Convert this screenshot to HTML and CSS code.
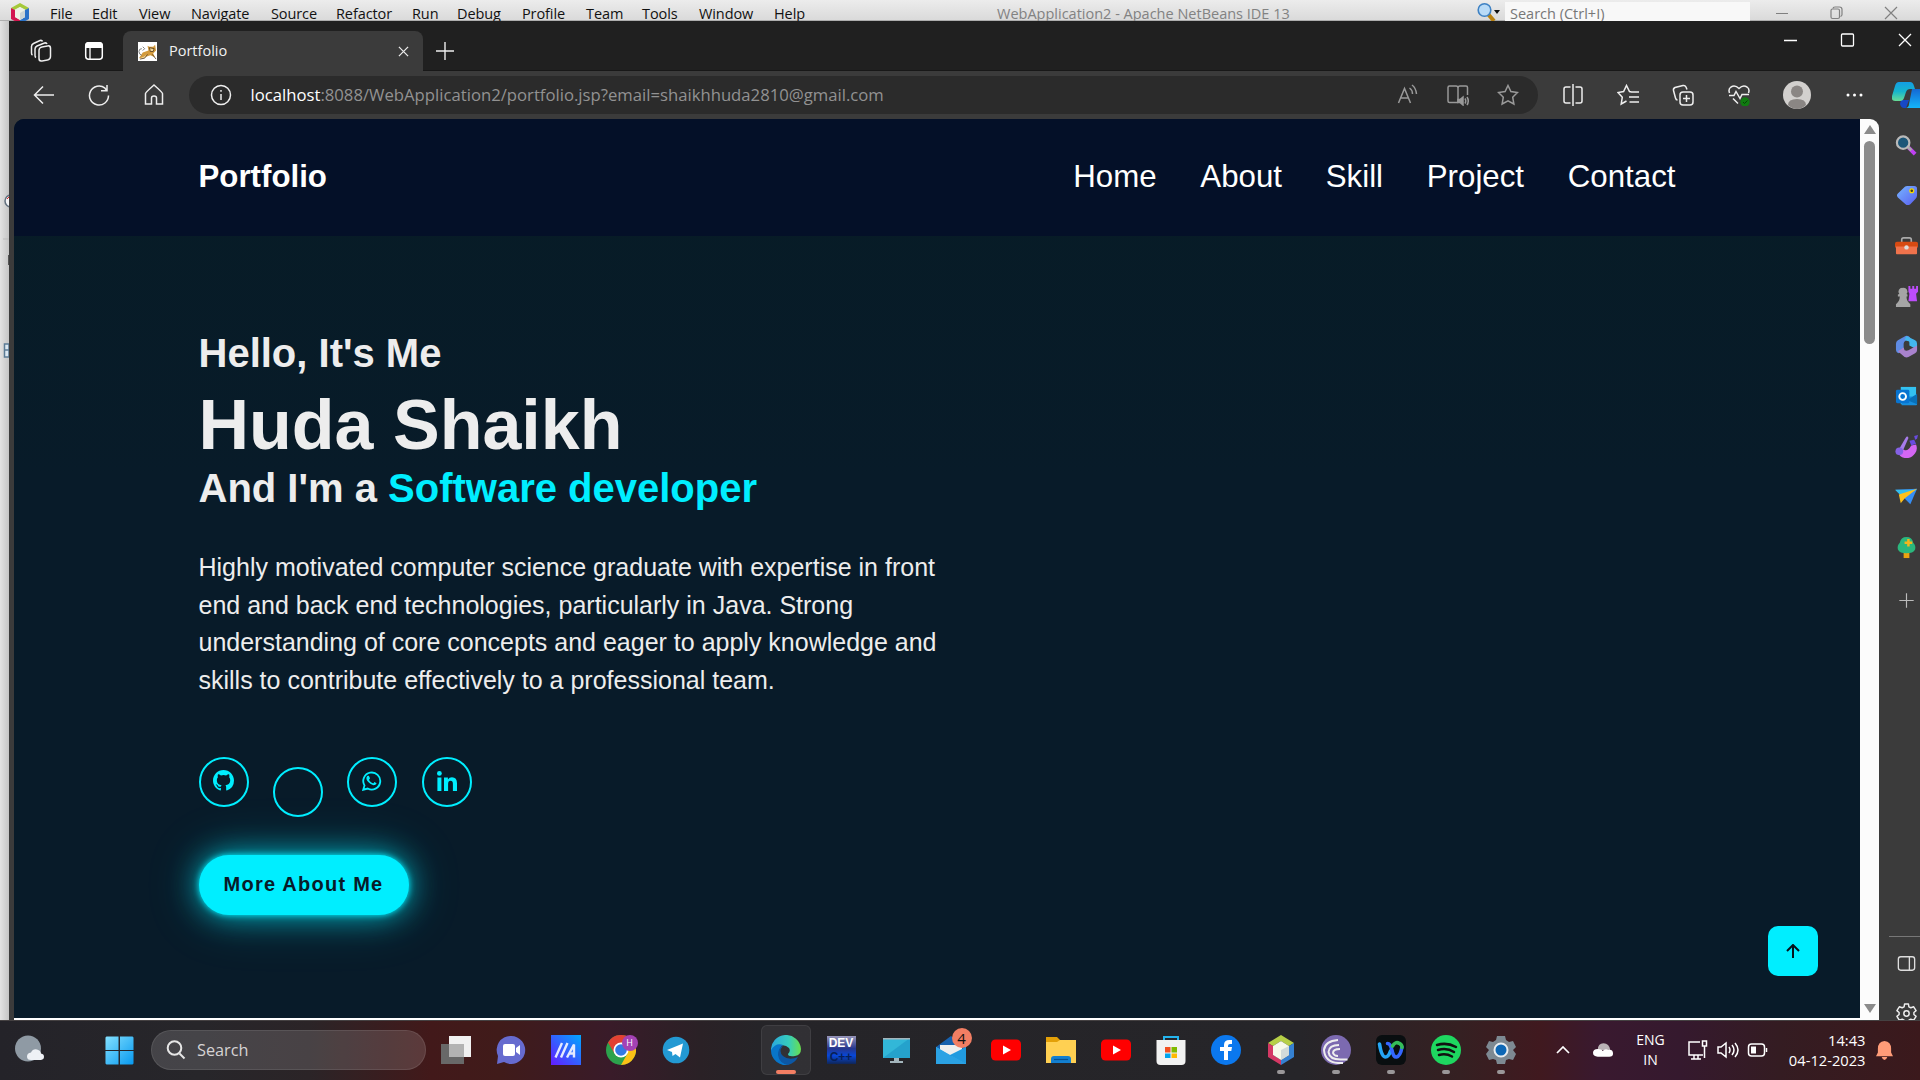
FILE: index.html
```html
<!DOCTYPE html>
<html lang="en">
<head>
<meta charset="utf-8">
<title>Portfolio</title>
<link rel="stylesheet" href="styles.css">
</head>
<body>
<div class="screen">
  <header class="ide">
    <svg class="ide-logo" viewBox="0 0 20 22"><path d="M1 6 10 1l9 5-3 2-6-3-6 3z" fill="#a5c93a"/><path d="M1 6v11l9 5v-4l-5-3V8z" fill="#d3164f"/><path d="M19 6v11l-9 5v-4l5-3V8z" fill="#2a72c8"/><path d="m5 8 5-3 5 3v7l-5 3-5-3z" fill="#eef1e6"/><path d="m10 11 5-3v7l-5 3z" fill="#ccd5d6"/></svg>
    <nav class="ide-menu"><span>File</span><span>Edit</span><span>View</span><span>Navigate</span><span>Source</span><span>Refactor</span><span>Run</span><span>Debug</span><span>Profile</span><span>Team</span><span>Tools</span><span>Window</span><span>Help</span></nav>
    <div class="ide-title">WebApplication2 - Apache NetBeans IDE 13</div>
    <svg class="ide-find" viewBox="0 0 24 21"><path d="m11 14 6 7" stroke="#b8800e" stroke-width="4"/><circle cx="7.500" cy="10" r="6.300" fill="#b9dbf7" stroke="#3f82c4" stroke-width="1.600"/><path d="M17 10h6l-3 4z" fill="#111"/></svg>
    <div class="ide-search">Search (Ctrl+I)</div>
    <svg class="ide-controls" viewBox="0 0 136 21" fill="none" stroke="#808080" stroke-width="1.200"><path d="M5 13.500h12M114 7l12 12M126 7l-12 12"/><rect x="60" y="9" width="8.500" height="9.500" rx="1.500"/><path d="M62 8.500q0-1.500 2-1.500h4.500q2.500 0 2.500 2.500v5q0 1.500-1.500 2"/></svg>
  </header>

  <div class="workspace">
    <aside class="ide-edge">
      <svg viewBox="0 0 9 300"><circle cx="11" cy="101" r="6" fill="#f3f3f5" stroke="#62707e" stroke-width="1.500"/><path d="m7 99 2-2" stroke="#d22"/><path d="M3 139h6" stroke="#bbb"/><path d="M8 155h1v10H8z" fill="#555"/><path d="M4.500 244H9v13H4.500zM5 250h4" fill="#dce8f2" stroke="#5b7b95" stroke-width="1.500"/></svg>
    </aside>
    <div class="browser">
      <div class="tabs">
        <svg class="tab-tool" viewBox="0 0 22 24" fill="none" stroke="#eee" stroke-width="1.500"><rect x="9" y="8" width="11.500" height="14" rx="3" transform="skewY(-10) translate(0 2)"/><path d="M6 18.500q-1-.5-1-2V10q0-2 2-3l7.500-3q2-.5 2.500 1"/><path d="M2.500 16q-1-.5-1-2V7.500q0-2 2-3L10 1.500q2-.5 2.500 1"/></svg>
        <svg class="tab-tool second" viewBox="0 0 20 20"><rect x="1.700" y="1.700" width="16.600" height="16.600" rx="3" fill="none" stroke="#fff" stroke-width="1.500"/><path d="M1.500 7V4q0-3 3-3h11q3 0 3 3v3z" fill="#fff"/><path d="M6 7v11" stroke="#fff" stroke-width="1.300"/></svg>
        <div class="tab">
          <svg class="favicon" viewBox="0 0 20 20"><path d="M0 0h20v20H0z" fill="#fff"/><path d="m1 17 4-6 6-2-1-5 2 1h4l2-2 1 6-3 3 2 4-5-2-6 2z" fill="#d49b3c"/><path d="m12 6 5 1-1 3h-3zM2 18l5-1 3-4M15 13l4 5" fill="#f2d698" stroke="#4c3215" stroke-width=".8"/><path d="M4 7Q1 7 1 10t3 4M5 5l2 2-2 2" fill="none" stroke="#777"/></svg>
          <span class="tab-name">Portfolio</span>
          <svg class="tab-close" viewBox="0 0 12 12"><path d="m1 1 10 10M11 1 1 11" stroke="#e8e8e8" stroke-width="1.400"/></svg>
        </div>
        <svg class="tab-new" viewBox="0 0 18 18"><path d="M9 0v18M0 9h18" stroke="#eee" stroke-width="1.400"/></svg>
        <svg class="win-controls" viewBox="0 0 130 16" fill="none" stroke="#fff" stroke-width="1.300"><path d="M1 8.500h13M116 2l12 12M128 2l-12 12"/><rect x="58.500" y="2" width="12" height="12" rx="1"/></svg>
      </div>

      <div class="toolbar">
        <svg class="nav-icon" viewBox="0 0 22 22"><path d="M22 11H3M11 2.500 2.500 11l8.500 8.500"/></svg>
        <svg class="nav-icon" viewBox="0 0 22 22"><path d="M20.500 11.500A9.500 9.500 0 1 1 17 4.200l1.500 2M19 1v5.700h-6"/></svg>
        <svg class="nav-icon" viewBox="0 0 22 22"><path d="M2.500 9.500Q2.500 8.500 11 1q8.500 7.500 8.500 8.500v10.500h-6v-6q0-2-2.500-2t-2.500 2v6h-6z"/></svg>
        <div class="address">
          <svg class="info" viewBox="0 0 22 22"><circle cx="11" cy="11" r="9.500"/><path d="M11 10v6M11 6v1.800"/></svg>
          <div class="url"><b>localhost</b>:8088/WebApplication2/portfolio.jsp?email=shaikhhuda2810@gmail.com</div>
          <svg class="dim" viewBox="0 0 22 22"><path d="M1.500 19 7.500 4.500 13.500 19M3.500 14h8M12.500 4q3 2 3 6M15 1q4 3 4.500 9"/></svg>
          <svg class="dim" viewBox="0 0 22 22"><path d="M11 18.500H2.500q-1.500 0-1.500-1.500V3.500Q1 2 2.500 2H9q2 0 2 2 0-2 2-2h6q1.500 0 1.500 1.500V11M11 4v14"/><path d="M11 15.500h2l3-2.500v8l-3-2.500h-2z" fill="#999"/><path d="M18 14.500q1.500 2.500 0 5M20 13q2.500 4 0 8"/></svg>
          <svg class="dim" viewBox="0 0 22 22"><path d="m11 1.500 2.900 6.100 6.600.9-4.800 4.700 1.200 6.800-5.900-3.200L5.100 20l1.200-6.800L1.500 8.500l6.600-.9z"/></svg>
        </div>
        <div class="tools">
          <svg viewBox="0 0 22 22"><path d="M11 0v22M8.500 3H4Q2 3 2 5v12q0 2 2 2h4.500M13.500 3H18q2 0 2 2v12q0 2-2 2h-4.500"/></svg>
          <svg viewBox="0 0 22 22"><path d="m14.500 8-2-.4L9.500 1.500 6.600 7.600 1 8.500l4.300 4.700L4.200 20l5.300-3M13.500 8H22M12 13h10M12.500 18H22"/></svg>
          <svg viewBox="0 0 22 22"><rect x="8" y="8" width="13" height="13" rx="3"/><path d="M14.500 11v7M11 14.500h7M5.500 16q-1.500 0-2-2L1.500 6.500q-.5-2 1.500-3l8-2q2-.5 3 1.500l1 2.500"/></svg>
          <svg viewBox="0 0 22 22"><path d="M1.500 9Q0 5 3 3q4-2.500 8 1.500Q15 .5 19 3q3 2 1.500 6M1 11.500h5l2-4 4 7 2-4h7M5 14.500l5 5"/><circle cx="17" cy="18" r="4.700" fill="#107c10" stroke="none"/><path d="m15 18 1.500 1.500 3-3" stroke="#073f08" stroke-width="1"/></svg>
          <svg class="avatar" viewBox="0 0 28 28"><circle cx="14" cy="14" r="14" fill="#d2d0ce"/><circle cx="14" cy="10.500" r="6" fill="#8a8684"/><path d="M5 24q0-6 9-6t9 6q-4 4-9 4t-9-4z" fill="#8a8684"/></svg>
          <svg viewBox="0 0 22 22"><g fill="#fff" stroke="none"><circle cx="4" cy="11" r="1.500"/><circle cx="10.500" cy="11" r="1.500"/><circle cx="17" cy="11" r="1.500"/></g></svg>
        </div>
        <svg class="copilot" viewBox="0 0 28 28"><defs><linearGradient id="cpA" x2="0" y2="1"><stop stop-color="#139de5"/><stop offset=".5" stop-color="#16b5cc"/><stop offset="1" stop-color="#68dc95"/></linearGradient><linearGradient id="cpB" x2="0" y2="1"><stop stop-color="#1468d4"/><stop offset="1" stop-color="#14b5fa"/></linearGradient></defs><path d="M9 19h8l-3 8h-2q-3 0-4-4z" fill="#1748c7"/><path d="M7 1h11q3 0 4 4l1 3h-5q-3 0-4 3l-2 6q-1 3-4 3H3q-4 0-3-5L3 5q1-4 4-4z" fill="url(#cpA)"/><path d="M20 8h8v19H14q3-1 3-4l1-5z" fill="url(#cpB)"/></svg>
      </div>

      <div class="content">
        <main class="page">
          <header class="site-header">
            <div class="logo">Portfolio</div>
            <nav class="site-nav"><a>Home</a><a>About</a><a>Skill</a><a>Project</a><a>Contact</a></nav>
          </header>
          <section class="hero">
            <h3>Hello, It's Me</h3>
            <h1>Huda Shaikh</h1>
            <h3 class="role">And I'm a <span>Software developer</span></h3>
            <p>Highly motivated computer science graduate with expertise in front<br>end and back end technologies, particularly in Java. Strong<br>understanding of core concepts and eager to apply knowledge and<br>skills to contribute effectively to a professional team.</p>
            <div class="social">
              <a><svg viewBox="0 0 16 16"><path d="M8 0C3.580 0 0 3.580 0 8c0 3.540 2.290 6.530 5.470 7.590.4.070.55-.17.55-.38v-1.490c-2.010.37-2.530-.49-2.690-.94-.09-.23-.48-.94-.82-1.130-.28-.15-.68-.52-.01-.53.63-.01 1.080.58 1.230.82.72 1.210 1.870.87 2.330.66.07-.52.28-.87.51-1.070-1.780-.2-3.640-.89-3.640-3.950 0-.87.31-1.590.82-2.150-.08-.2-.36-1.020.08-2.120 0 0 .67-.21 2.200.82a7.500 7.500 0 0 1 4 0c1.530-1.040 2.200-.82 2.200-.82.44 1.100.16 1.920.08 2.120.51.56.82 1.270.82 2.150 0 3.070-1.870 3.750-3.650 3.950.29.25.54.73.54 1.480v2.200c0 .21.15.46.55.38A8 8 0 0 0 16 8c0-4.420-3.580-8-8-8z"/></svg></a>
              <a class="empty"></a>
              <a><svg class="whatsapp" viewBox="0 0 24 24"><path d="M17.500 14.400c-.3-.2-1.800-.9-2-1s-.5-.1-.7.200-.8 1-1 1.200-.4.200-.7 0c-2-.9-3.300-1.800-4.600-4-.3-.6.400-.6 1-1.800.1-.2 0-.4 0-.5l-1-2.300c-.2-.6-.5-.5-.7-.5h-.6c-.2 0-.6.100-.9.400-.8.900-1.200 2-1 3.200.3 1.900 1.700 3.600 3.600 5.200 2.400 1.900 4.500 2.700 6 2.400.9-.2 2-.8 2.300-1.600.3-.8.300-1.400.2-1.500z"/><path d="M1.500 22.500 3 17.300A10.200 10.200 0 1 1 6.900 21z" fill="none" stroke="#00eeff" stroke-width="2.200"/></svg></a>
              <a><svg class="linkedin" viewBox="0 0 20 20"><circle cx="2.400" cy="2.400" r="2.400"/><path d="M.4 6.500h4V20h-4zM7 6.500h3.900v1.900q1.300-2.200 4.100-2.200 5 0 5 6V20h-4.100v-7q0-3.300-2.300-3.300-2.500 0-2.500 3.300v7H7z"/></svg></a>
            </div>
            <a class="more">More About Me</a>
          </section>
          <a class="to-top"><svg viewBox="0 0 14 14"><path d="M7 14V1M1 7l6-6 6 6"/></svg></a>
        </main>
        <div class="scrollbar"><i class="arrow-up"></i><i class="thumb"></i><i class="arrow-down"></i></div>
        <aside class="sidebar">
          <svg viewBox="0 0 24 24"><path d="m14 14 7 7" stroke="#c040f2" stroke-width="4"/><path d="m13 13 4 4" stroke="#aaa" stroke-width="3"/><circle cx="8.500" cy="9" r="6.500" fill="#1b5678" stroke="#b9b9b9" stroke-width="2.300"/></svg>
          <svg viewBox="0 0 24 24"><defs><linearGradient id="tag" x2="1" y2="1"><stop stop-color="#76b6ff"/><stop offset="1" stop-color="#5a5ef0"/></linearGradient></defs><path d="M13 2h7q3 0 3 3v7q0 2-2 4l-5 5q-3 2-5 0l-8-7q-2-2 0-4l7-7q1-1 3-1z" fill="url(#tag)"/><circle cx="17.500" cy="7" r="2" fill="#443b20" stroke="#f7d900" stroke-width="1.300"/></svg>
          <svg viewBox="0 0 24 24"><path d="M7 9V6q0-2 2-2h6q2 0 2 2v3" fill="none" stroke="#aaa" stroke-width="1.700"/><path d="M0 10q0-2 2-2h20q2 0 2 2v4H0z" fill="#d74a12"/><path d="M1 13h22v7q0 1-1 1H2q-1 0-1-1z" fill="#f0734c"/><circle cx="12" cy="14" r="2.300" fill="#ddd"/></svg>
          <svg viewBox="0 0 24 24"><path d="M14 1h2v3h2V1h2v3h2V1h2v6l-2 2 1 8H14l1-8-1-2z" fill="#bd4dfa"/><path d="M8 3a4 4 0 0 0-3.500 6.500L3 10v2h2q0 5-4 8v3h15v-3q-4-3-4-8h1v-2l-1-.5A4 4 0 0 0 8 3z" fill="#a5a5a5"/></svg>
          <svg viewBox="0 0 24 24"><path d="M11 1 3 5.500Q1 7 1 9v6q0 3 3 4l5-3V9q0-2 2-3l5-3q-2-3-5-2z" fill="#5f8be3"/><path d="m12 1 9 4.500q2 1 2 3.500v6l-8-4V8q0-2-3-2l-2-1z" fill="#43b6ee"/><path d="m3 17 6-4 1 3q2 1 4 0l9-5v5q0 2-2 3l-7 4q-2 1-4 0z" fill="#a982cd"/></svg>
          <svg viewBox="0 0 24 24"><path d="M6 2h16v18H6z" fill="#33c2f1"/><path d="M6 12h17v8q0 1-1 1H7z" fill="#168edd"/><path d="m13 16 10-7v11z" fill="#0870b8"/><rect x="1" y="5" width="14" height="14" rx="1.500" fill="#0874d1"/><circle cx="8" cy="12" r="3.500" fill="none" stroke="#fff" stroke-width="2"/></svg>
          <svg viewBox="0 0 24 24"><path d="M9 15q4 3 8-4l5-1q2 5-1 9-4 6-11 5-6-1-6-6z" fill="#d466f3"/><path d="M11 3q2-3 3 0L8 17l-4-2z" fill="#a77ceb"/><circle cx="4.500" cy="17" r="4" fill="#8561e5"/><path d="m15 6 5-1 2 4-5 2zM20 1l4-1-1 4-2 1z" fill="#694be0"/></svg>
          <svg viewBox="0 0 24 24"><path d="m1 5 22-1-7 16z" fill="#368ef4"/><path d="M0 5h23L6 11z" fill="#35bded"/><path d="M4 10 23 4 10 14l-4 5z" fill="#ffc11a"/></svg>
          <svg viewBox="0 0 24 24"><path d="M9 16h6v7H9z" fill="#eba310"/><path d="M12 1q6 0 7 6 3 3 2 7-2 4-9 4t-9-4q-1-4 2-7 1-6 7-6z" fill="#2bb77d"/><path d="M14 3v8M10 7h8" stroke="#f5b51c" stroke-width="2.600"/></svg>
          <svg class="plus" viewBox="0 0 24 24"><path d="M12 4.500v15M4.500 12h15" stroke="#bbb" stroke-width="1.200"/></svg>
          <hr>
          <svg class="panel" viewBox="0 0 24 24" fill="none" stroke="#ddd" stroke-width="1.400"><rect x="3.500" y="5" width="17" height="14" rx="2.500"/><path d="M15 5v14"/></svg>
          <svg class="gear" viewBox="0 0 24 24" fill="none" stroke="#eee" stroke-width="1.500"><circle cx="12" cy="12" r="2.800"/><path d="m10 2-.5 3-2 1L4.500 5 2 9l2.300 2v2L2 15l2.500 4 3-1 2 1 .5 3h4l.5-3 2-1 3 1 2.500-4-2.300-2v-2L22 9l-2.500-4-3 1-2-1L14 2z" stroke-linejoin="round"/></svg>
        </aside>
      </div>
    </div>
  </div>

  <footer class="taskbar">
    <svg class="weather" viewBox="0 0 30 34"><circle cx="14" cy="15.500" r="13" fill="#8f9aa4"/><path d="M17 27q-4 0-4-3.500t4-4q2-4 6-3t4 4q3 .5 3 3.200T27 27z" fill="#eef1f5"/></svg>
    <svg class="start" viewBox="0 0 30 30"><defs><linearGradient id="win" x2="1" y2="1"><stop stop-color="#83e0ff"/><stop offset="1" stop-color="#0799ef"/></linearGradient></defs><path d="M1.500.5H14v14H.5v-13zM15.500.5h13l1 1v13h-14zM.5 15.500H14v14H1.500l-1-1zM15.500 15.500h14v13l-1 1h-13z" fill="url(#win)"/></svg>
    <div class="search"><svg viewBox="0 0 20 20"><circle cx="8.500" cy="8" r="6.800"/><path d="m13.500 13.500 5 5"/></svg><span>Search</span></div>
    <div class="apps">
      <div><svg viewBox="0 0 30 30"><path d="M8 1h22v21H8z" fill="#f1f1f1"/><path d="M0 9h23v20H0z" fill="#686868"/><path d="M8 9h15v13H8z" fill="#b3b3b3"/></svg></div>
      <div><svg viewBox="0 0 30 30"><path d="M15 1a14 14 0 1 1-7 26l-7 2 1-8A14 14 0 0 1 15 1z" fill="#666bcf"/><rect x="7" y="9" width="12" height="12" rx="2" fill="#fff"/><path d="m20 13 4-3v10l-4-3z" fill="#fff"/></svg></div>
      <div><svg viewBox="0 0 30 30"><defs><linearGradient id="ma" x1="1" x2="0" y2="1"><stop stop-color="#00a8ff"/><stop offset="1" stop-color="#641bff"/></linearGradient></defs><path d="M0 0h30v30H0z" fill="url(#ma)"/><path d="M4.500 22.500 11 8M10 22.500 16.500 8M16 22.500 23 9.500v13M18.500 18.500H23" fill="none" stroke="#e4eaff" stroke-width="2.400"/></svg></div>
      <div><svg viewBox="0 0 30 30"><circle cx="15" cy="15" r="15" fill="#2ca24c"/><path d="M2 7.500A15 15 0 0 1 28 7.500H15l-6.500 11z" fill="#e34133"/><path d="M28 7.500A15 15 0 0 1 15 30l6.500-11.500L15 7.500z" fill="#fbc116"/><circle cx="15" cy="15" r="7.500" fill="#fff"/><circle cx="15" cy="15" r="5.800" fill="#3379e4"/></svg><em class="profile">H</em></div>
      <div><svg viewBox="0 0 30 30"><circle cx="15" cy="15" r="13.300" fill="#2399d3"/><path d="m6 15 16-6.500-3 14-4.500-3.500-3 2-.5-4z" fill="#fff"/></svg></div>
      <div></div>
      <div class="current"><svg viewBox="0 0 30 30"><defs><linearGradient id="ed" x2="1"><stop stop-color="#2aa7de"/><stop offset=".6" stop-color="#36cdbb"/><stop offset="1" stop-color="#69df4d"/></linearGradient></defs><path d="M0 16a15 15 0 0 1 30-2q0 6-6 7-7 1-7-2 3-3 1-6-5-5-12-1-4 1-6 4z" fill="url(#ed)"/><path d="M0 15q5-8 12-5-5 4-4 11 2 7 10 9A15 15 0 0 1 0 15z" fill="#0875c9"/><path d="M12 11q-5 5 0 10 6 5 15 1-3 6-10 8-9-2-10-10 0-7 5-9z" fill="#0c57a4"/></svg></div>
      <div><span class="dev"><b>DEV</b><b class="cpp">C++</b></span></div>
      <div><svg viewBox="0 0 30 30"><path d="M2 3h27v20H2z" fill="#32b7d8"/><path d="M2 23 29 3v20z" fill="#1c94c5" opacity=".6"/><path d="M2 3h27v1.500H2zM13 23h5v3h4v2H9v-2h4z" fill="#a4b5bc"/></svg></div>
      <div><svg viewBox="0 0 30 30"><path d="m0 12 15-11 15 11v17H0z" fill="#1761ae"/><path d="M4 10h22v10H4z" fill="#eee"/><path d="m0 12 15 9 15-9v17H0z" fill="#39b6f4"/><path d="m0 12 30 17H0z" fill="#2ba2e4"/><path d="M30 12v17L14 20z" fill="#219be0"/></svg><em class="count">4</em></div>
      <div><svg viewBox="0 0 30 30"><rect y="4.500" width="30" height="21" rx="4.500" fill="#f00"/><path d="m12 10.500 8 4.500-8 4.500z" fill="#fff"/></svg></div>
      <div><svg viewBox="0 0 30 30"><path d="M0 2h11l3 3v9H0z" fill="#e3a008"/><path d="M0 7h11l3-2h16v23H0z" fill="#ffd052"/><path d="M5 28v-4q0-3 3-3h14q3 0 3 3v4z" fill="#137fd0"/><path d="M8 24.500h14" stroke="#075091" stroke-width="1.200"/></svg></div>
      <div><svg viewBox="0 0 30 30"><rect y="4.500" width="30" height="21" rx="4.500" fill="#f00"/><path d="m12 10.500 8 4.500-8 4.500z" fill="#fff"/></svg></div>
      <div><svg viewBox="0 0 30 30"><path d="M8 6V2h14v4" fill="none" stroke="#24b4ed" stroke-width="2"/><path d="M.5 5h29v21q0 4-4 4h-21q-4 0-4-4z" fill="#f2f2f2"/><path d="M9 12h5.500v5.500H9z" fill="#f25022"/><path d="M15.500 12H21v5.500h-5.500z" fill="#7fba00"/><path d="M9 18.500h5.500V23H9z" fill="#00a4ef"/><path d="M15.500 18.500H21V23h-5.500z" fill="#ffb900"/></svg></div>
      <div><svg viewBox="0 0 30 30"><circle cx="15" cy="15" r="15" fill="#0b78ee"/><path d="M13 25V16H9v-4h4V10q0-5 5.500-5H21v4h-2q-2 0-2 2v1h4l-.7 4H17v9z" fill="#fff"/></svg></div>
      <div class="open"><svg viewBox="0 0 30 30"><path d="m2 8 13-8 13 8-5 3-8-5-8 5z" fill="#b6cf47"/><path d="m2 8 5 3v9l8 5v5L2 22z" fill="#d43864"/><path d="m28 8-5 3v9l-8 5v5l13-8z" fill="#3581d2"/><path d="m7 11 8-5 8 5v9l-8 5-8-5z" fill="#f7f9e9"/><path d="m15 15 8-4v9l-8 5z" fill="#d2dbda"/></svg></div>
      <div class="open"><svg viewBox="0 0 30 30" fill="none" stroke="#eee" stroke-width="2"><circle cx="15" cy="15" r="15" fill="#7c6ab0" stroke="none"/><path d="M17 5Q4 6 3 15q1 12 14 13h5M18 10Q8 10 7.500 17q1 7.500 12 7.500h7M19 14q-7 0-7 4 1 3 5 3"/></svg></div>
      <div class="open"><svg viewBox="0 0 30 30"><rect width="30" height="30" rx="6" fill="#090e10"/><path d="M3.500 9q2 13 6 13 3 0 5-6" fill="none" stroke="#25a6f6" stroke-width="3.600" stroke-linecap="round"/><path d="M11.500 8.500q3 0 4.500 7t4.500 6.500q4-1 5.500-10" fill="none" stroke="#3466ff" stroke-width="3.600" stroke-linecap="round"/><path d="M16.500 11q3-5 7-2.500 2.500 1 2.500 4" fill="none" stroke="#35bd58" stroke-width="3.600" stroke-linecap="round"/></svg></div>
      <div class="open"><svg viewBox="0 0 30 30"><circle cx="15" cy="15" r="15" fill="#1ed760"/><path d="M6 10q10-3 19 2M7 15q9-2.500 16 2M8 20q7-2 13 1.500" fill="none" stroke="#111" stroke-width="2.500" stroke-linecap="round"/></svg></div>
      <div class="open"><svg viewBox="0 0 30 30"><path d="M11 1h8l1 4 3 2 4-1 3 6-3 3 3 4-3 6-4-1-3 1-1 4h-8l-1-4-3-1-4 1-3-6 3-4-3-3 3-6 4 1 3-2z" fill="#7d8992"/><circle cx="15" cy="15" r="6.500" fill="#0d67b5" stroke="#e8edf0" stroke-width="2"/></svg></div>
    </div>
    <div class="tray">
      <svg class="chevron" viewBox="0 0 14 8"><path d="m1 7 6-6 6 6" fill="none" stroke="#fff" stroke-width="1.700"/></svg>
      <svg class="cloud" viewBox="0 0 22 16"><path d="M5 8Q5 1 11 1t7 7z" fill="#b9b2b5"/><path d="M5 15q-5 0-5-4t5-4q4 0 5 2 3-3 6-1 5-1 5 4 0 3-4 3z" fill="#fff"/></svg>
      <div class="lang">ENG<br>IN</div>
      <svg class="network" viewBox="0 0 22 22"><path d="M13 3H2v13h14M7 16v4m-3 0h10m-3-4v4M15.500 2h4v5h-4zM17.500 7v12"/></svg>
      <svg class="volume" viewBox="0 0 22 22"><path d="M1 8v6h3l5 4V4L4 8zM12 8q2 3 0 6M15 6q4 5 0 10M18 4q6 7 0 14"/></svg>
      <svg class="battery" viewBox="0 0 22 22"><rect x="1.500" y="5" width="16" height="12" rx="3"/><path d="M4 7.500h5v7H4z" fill="#fff" stroke="none"/><path d="M19.500 9v4"/></svg>
      <div class="clock">14:43<br>04-12-2023</div>
      <svg class="bell" viewBox="0 0 18 20"><path d="M9 0Q2 1 2 8v4l-2 4h18l-2-4V8q0-7-7-8zM6 17h6q-1 3-3 3t-3-3z" fill="#ff9c78"/></svg>
    </div>
  </footer>
</div>
</body>
</html>
```
FILE: styles.css
```css
* { box-sizing: border-box; }
body { margin: 0; background: #202020; font-family: "Open Sans", "Noto Sans", sans-serif; }
svg { display: block; flex: none; }
.screen { width: 1920px; height: 1080px; overflow: hidden; display: flex; flex-direction: column; }

/* IDE window behind the browser */
.ide { height: 21px; flex: none; display: flex; background: linear-gradient(#ececec, #dadada); border-bottom: 1px solid #adadad; font-size: 14.500px; line-height: 15px; white-space: nowrap; color: #111; }
.ide-logo { width: 20px; height: 22px; margin: 2px 20px 0 10px; }
.ide-menu { display: grid; grid-template-columns: 42px 47px 52px 80px 65px 76px 45px 65px 64px 56px 57px 75px 223px; letter-spacing: -.1px; padding-top: 6px; }
.ide-title { width: 479px; padding-top: 6px; color: #828282; }
.ide-find { width: 24px; height: 21px; margin-left: 1px; }
.ide-search { width: 245px; height: 19px; margin: 2px 21px 0 4px; padding: 4px 0 0 5px; background: #f8f8f8; color: #777; }
.ide-controls { width: 136px; height: 21px; }
.workspace { height: 999px; flex: none; display: flex; position: relative; }
.ide-edge { width: 9px; background: linear-gradient(90deg, #e2e2e2, #c4c4c4); padding-top: 79px; }
.ide-edge svg { width: 9px; height: 300px; }

/* Browser chrome */
.browser { width: 1911px; background: #3b3b3b; border-top-left-radius: 8px; overflow: hidden; display: flex; flex-direction: column; }
.tabs { height: 50px; flex: none; display: flex; align-items: center; background: #202020; border-bottom: 1px solid #181818; }
.tab-tool { width: 22px; height: 24px; margin-left: 21px; margin-top: 10px; }
.tab-tool.second { width: 20px; height: 20px; margin-left: 32px; }
.tab { width: 300px; height: 40px; margin: 10px 0 -1px 19px; padding: 0 14px 0 15px; display: flex; align-items: center; background: #3b3b3b; border-radius: 8px 8px 0 0; color: #f2f2f2; font-size: 14.500px; }
.favicon { width: 19px; height: 19px; }
.tab-name { flex: 1; margin-left: 12px; margin-top: -1px; }
.tab-close { width: 11px; height: 11px; }
.tab-new { width: 18px; height: 18px; margin-left: 13px; margin-top: 10px; }
.win-controls { width: 130px; height: 16px; margin: -12px 7px 0 auto; }
.toolbar { height: 48px; flex: none; display: flex; align-items: center; }
.toolbar svg { width: 22px; height: 22px; fill: none; stroke: #eee; stroke-width: 1.500; }
.nav-icon { margin-left: 23px; margin-right: 10.500px; }
.address { width: 1351px; height: 38px; margin-left: 13px; padding: 0 19px 0 21px; display: flex; align-items: center; background: #2b2b2b; border-radius: 19px; }
.url { flex: 1; margin: -2px 0 0 19px; font-size: 16.700px; color: #929292; white-space: nowrap; }
.url b { font-weight: 400; color: #fff; }
.toolbar .dim { stroke: #999; margin-left: 28px; }
.tools { display: flex; align-items: center; gap: 33.200px; margin-left: 24px; }
.toolbar .avatar { width: 28px; height: 28px; stroke: none; }
.toolbar .copilot { width: 28px; height: 28px; margin-left: 26px; stroke: none; }
.content { height: 901px; flex: none; display: flex; padding-left: 5px; }

/* Portfolio page */
.page { position: relative; width: 1846px; background: linear-gradient(#071c26, #081b29 40%); border-top-left-radius: 10px; border-bottom: 2px solid #fff; overflow: hidden; font-family: "Liberation Sans", Arial, sans-serif; color: #ededed; }
.site-header { height: 117px; padding: 0 184.500px 2px; display: flex; align-items: center; justify-content: space-between; background: #041028; font-size: 31.250px; color: #fff; }
.logo { font-weight: 700; }
.site-nav { display: flex; gap: 43.750px; }
.hero { padding: 94px 0 0 184.500px; }
.hero h3, .hero h1, .hero p { margin: 0; white-space: nowrap; }
.hero h3 { font-size: 40px; line-height: 46px; }
.hero h1 { font-size: 70px; line-height: 80px; margin-top: 9px; }
.hero .role { margin-top: 0; }
.role span { color: #00eeff; }
.hero p { margin-top: 38.200px; font-size: 25px; line-height: 37.500px; }
.social { display: flex; gap: 24.300px; margin-top: 57.800px; }
.social a { width: 50px; height: 50px; border: 2px solid #00eeff; border-radius: 50%; display: flex; align-items: center; justify-content: center; }
.social a:last-child { margin-left: .5px; }
.social svg { width: 21px; height: 21px; fill: #00eeff; margin-top: -2px; }
.social .whatsapp, .social .linkedin { width: 20px; height: 20px; }
.social .empty { margin-top: 10px; }
.more { display: flex; align-items: center; justify-content: center; width: 210px; height: 60px; margin-top: 38px; border-radius: 50px; background: #00eeff; box-shadow: 0 0 6px #00eeff, 0 0 30px #00eeffb0, 0 0 54px #00eeff40; color: #081b29; font-size: 20px; font-weight: 600; letter-spacing: 1.250px; }
.to-top { position: absolute; right: 42px; bottom: 42px; width: 50px; height: 50px; border-radius: 10px; background: #00eeff; display: flex; align-items: center; justify-content: center; }
.to-top svg { width: 14px; height: 14px; fill: none; stroke: #06131d; stroke-width: 2; }

.scrollbar { width: 19px; background: #fcfcfc; border-top-right-radius: 9px; display: flex; flex-direction: column; align-items: center; padding: 6px 0 7px; }
.arrow-up, .arrow-down { border: 6px solid transparent; border-top: 0; border-bottom: 9px solid #8b8b8b; }
.thumb { width: 11px; height: 203px; margin-top: 7px; border-radius: 6px; background: #8b8b8b; }
.arrow-down { margin-top: auto; border-bottom: 0; border-top: 9px solid #8b8b8b; }
.sidebar { width: 41px; height: 901px; overflow: hidden; display: flex; flex-direction: column; gap: 27.200px; padding: 15px 2px 0 10px; align-items: flex-end; }
.sidebar svg { width: 23px; height: 23px; }
.sidebar .plus { margin-top: 3px; }
.sidebar hr { width: 31px; margin: 297px -2px 0 0; border: 0; border-top: 1px solid #777; }
.sidebar .panel { margin-top: -11.600px; }
.sidebar .gear { margin-top: -.6px; }

/* Taskbar */
.taskbar { height: 60px; flex: none; display: flex; align-items: center; padding-bottom: 1px; border-top: 1px solid #454142; background: linear-gradient(90deg, #242329 0, #27262a 200px, #2b2427 310px, #42191a 430px, #401b1a 500px, #391b29 610px, #2a2126 700px, #252428 760px, #262529 1300px, #352022 1460px, #40191f 1540px, #39192f 1600px, #35192e 1680px, #341c22 1780px, #3b191c 1920px); color: #fff; }
.weather { width: 30px; height: 34px; margin-left: 14px; margin-right: 60.500px; }
.start { width: 29px; height: 29px; }
.search { width: 275px; height: 40px; margin: 0 2.500px 0 17.500px; padding-left: 14px; display: flex; align-items: center; gap: 11px; border-radius: 20px; background: #ffffff24; border: 1px solid #ffffff18; font-size: 16.300px; color: #d6d3d4; }
.search svg { width: 20px; height: 20px; fill: none; stroke: #e6e6e6; stroke-width: 2; }
.apps { display: flex; }
.apps > div { position: relative; width: 55px; height: 50px; display: flex; align-items: center; justify-content: center; }
.apps > div > svg { width: 30px; height: 30px; }
.apps .current { width: 50px; margin: 0 2.500px; background: #ffffff0f; border: 1px solid #ffffff12; border-radius: 6px; }
.current::after, .open::after { content: ""; position: absolute; bottom: 1px; width: 8px; height: 4px; border-radius: 2px; background: #9a9799; }
.current::after { bottom: 0; width: 20px; background: #f27e63; }
.profile, .count { position: absolute; font-style: normal; text-align: center; border-radius: 50%; }
.profile { width: 16px; height: 16px; right: 11px; top: 10px; background: #a442b4; font-size: 9px; line-height: 16px; }
.count { width: 20px; height: 20px; right: 7px; top: 3px; background: #f27e63; color: #111; font-size: 15px; line-height: 20px; }
.dev { width: 29px; height: 28px; display: flex; flex-direction: column; align-items: center; background: linear-gradient(#9795b9, #26368d 45%, #0747d8 70%, #102657); font: 700 12px/14px "Liberation Sans", sans-serif; }
.dev .cpp { color: #071f56; }
.tray { flex: 1; display: flex; align-items: center; font-size: 14px; line-height: 20px; }
.tray svg { fill: none; stroke: #fff; stroke-width: 1.500; }
.chevron { width: 14px; height: 8px; margin-left: 27px; }
.cloud { width: 21px; height: 16px; margin-left: 23px; }
.tray .cloud, .tray .bell { stroke: none; }
.lang { width: 50px; margin-left: 12px; text-align: center; }
.network { width: 22px; height: 22px; margin-left: 11px; }
.volume { width: 22px; height: 22px; margin-left: 8px; }
.battery { width: 22px; height: 22px; margin-left: 8px; }
.clock { width: 90px; margin: -1px 0 0 7px; font-size: 14.700px; text-align: right; white-space: nowrap; }
.bell { width: 17px; height: 19px; margin-left: 10px; }
```
